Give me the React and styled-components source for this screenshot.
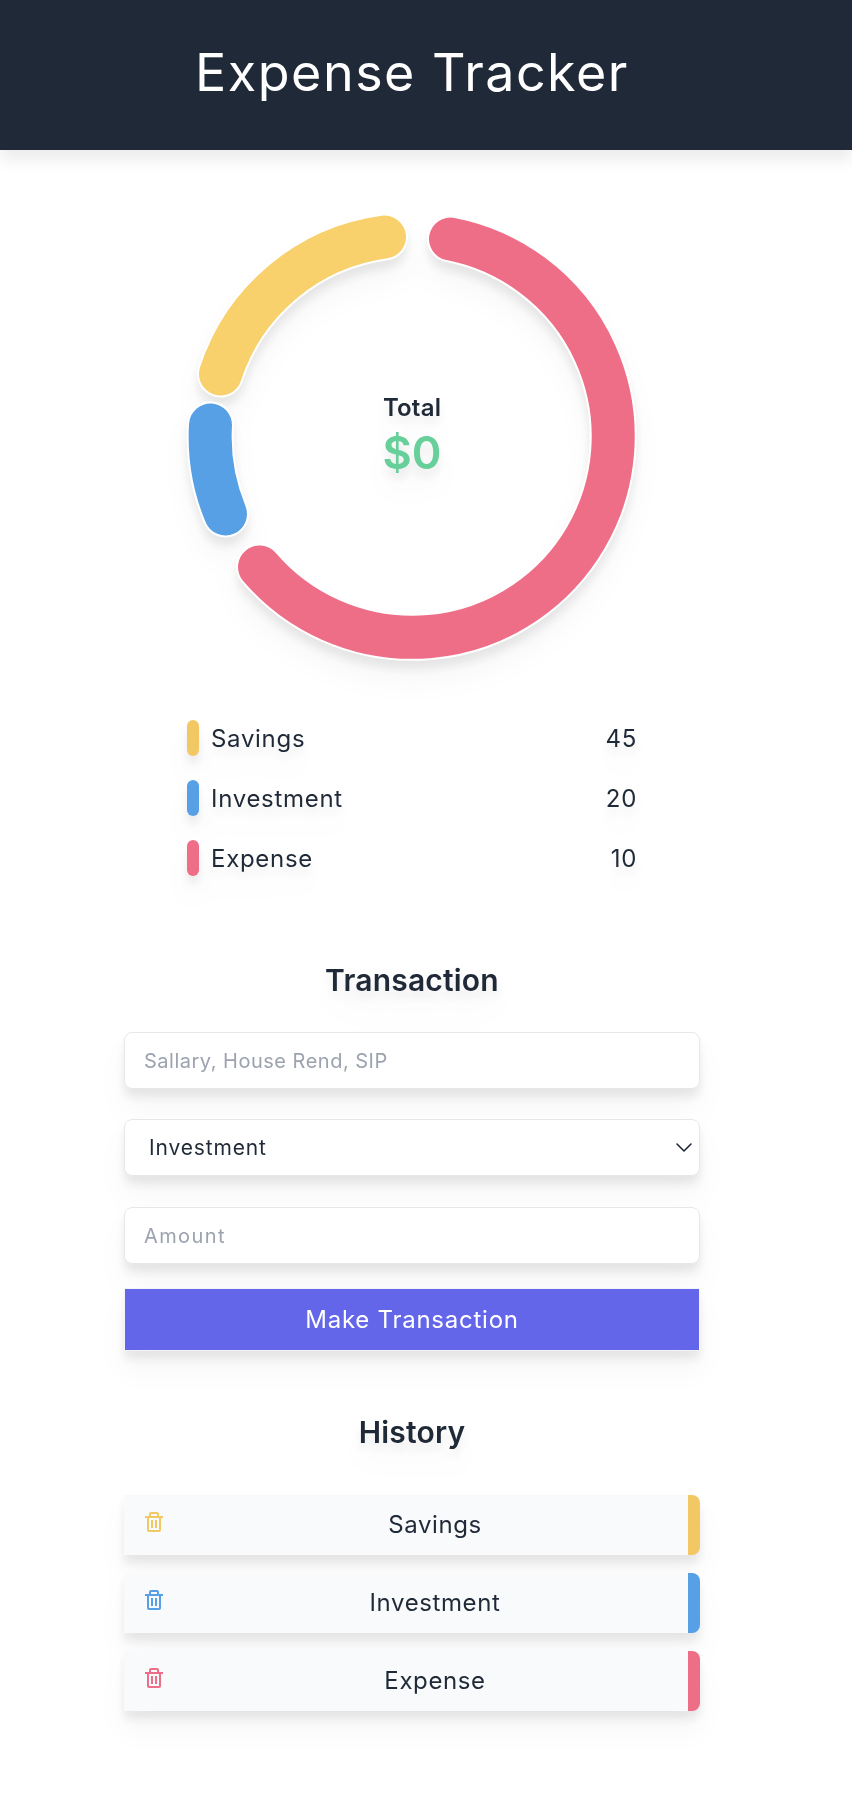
import React from "react";
import styled, { createGlobalStyle } from "styled-components";
import { BiTrash } from "react-icons/bi";

const Global = createGlobalStyle`
  html, body { margin: 0; padding: 0; background: #fff; }
  body { font-family: Inter, "Noto Sans", sans-serif; color: #1f2937; }
  * { box-sizing: border-box; }
`;

const Page = styled.div`width: 852px; height: 1804px; overflow: hidden; background: #fff;`;
const Header = styled.header`
  height: 150px; background: #1f2937; padding-right: 28px;
  display: flex; align-items: center; justify-content: center;
  box-shadow: 0 10px 15px rgba(0,0,0,0.08);
`;
const Title = styled.h1`
  margin: 0 0 6px; font-size: 52px; font-weight: 400; color: #fff; letter-spacing: 1.5px;
`;
const Main = styled.main`
  width: 824px; display: flex; flex-direction: column; align-items: center; padding-top: 56px;
  filter: drop-shadow(0 20px 13px rgba(0,0,0,0.03)) drop-shadow(0 8px 5px rgba(0,0,0,0.08));
`;
const ChartWrap = styled.div`width: 460px; height: 460px; position: relative;`;
const ChartSvg = styled.svg`display: block; overflow: visible;`;
const ChartCenter = styled.div`
  position: absolute; inset: 0; display: flex; flex-direction: column; align-items: center; justify-content: center;
`;
const TotalLabel = styled.div`font-size: 24px; font-weight: 600; line-height: 32px; letter-spacing: 0.2px; margin-top: -3px;`;
const TotalValue = styled.div`font-size: 45px; font-weight: 600; line-height: 50px; color: #66cf9a; margin-top: 4px;`;

const Legend = styled.ul`
  list-style: none; margin: 54px 0 0; padding: 0; width: 450px;
  display: flex; flex-direction: column; gap: 24px;
`;
const LegendRow = styled.li`display: flex; align-items: center; height: 36px; font-size: 24px; letter-spacing: 0.7px;`;
const Chip = styled.span`
  width: 12px; height: 36px; border-radius: 6px; background: ${p => p.$c}; margin-right: 12px;
`;
const LegendName = styled.span`flex: 1;`;
const Heading = styled.h2`
  margin: ${p => p.$mt}px 0 0; font-size: 30px; line-height: 36px; font-weight: 600; letter-spacing: 0.2px;
`;
const Form = styled.form`width: 576px; display: flex; flex-direction: column; margin-top: 34px;`;
const fieldCss = `
  width: 100%; height: 57px; border: 1px solid #e5e7eb; border-radius: 8px; background: #fff;
  font-family: inherit; font-size: 20px; color: #1f2937; outline: none;
`;
const Field = styled.input`
  ${fieldCss}
  padding: 0 19px; letter-spacing: ${p => p.$ls}px; margin-bottom: 30px;
  &::placeholder { color: #9ca3af; opacity: 1; }
`;
const SelectWrap = styled.div`position: relative; margin-bottom: 31px;`;
const Select = styled.select`
  ${fieldCss}
  appearance: none; display: block;
  padding: 0 24px; font-size: 21px; letter-spacing: 0.85px;
`;
const Chevron = styled.svg`position: absolute; right: 6px; top: 19px; pointer-events: none;`;
const SubmitButton = styled.button`
  width: 100%; height: 63px; border: 1px solid #f3f4f6; background: #6366e9; color: #fff; margin-top: -6px;
  font-family: inherit; font-size: 24px; letter-spacing: 0.75px;
`;
const History = styled.ul`list-style: none; margin: 45px 0 0; padding: 0; width: 576px; display: flex; flex-direction: column; gap: 18px;`;
const HistoryRow = styled.li`
  height: 60px; display: flex; background: #f9fafb; border-radius: 0 8px 8px 0; overflow: hidden;
  border-right: 12px solid ${p => p.$c};
`;
const DeleteIcon = styled.span`width: 58px; padding: 15px 0 0 18px; color: ${p => p.$c}; display: block; line-height: 0;`;
const HistoryName = styled.span`flex: 1; text-align: center; font-size: 24px; line-height: 60px; letter-spacing: 0.6px;`;

const CX = 229.5, CY = 230, R = 201;
const pt = (x, y) => `${CX + x} ${CY + y}`;
const arcs = [
  { c: "#f8d06c", d: `M${pt(-191,-62)} A${R} ${R} 0 0 1 ${pt(-27,-199)}` },
  { c: "#57a0e6", d: `M${pt(-186,78)} A${R} ${R} 0 0 1 ${pt(-201,-11)}` },
  { c: "#ef6e87", d: `M${pt(39,-197)} A${R} ${R} 0 1 1 ${pt(-152,131)}` },
];

const items = [
  ["Savings", 45, "#f2c864"],
  ["Investment", 20, "#57a0e6"],
  ["Expense", 10, "#ef6e87"],
];

export default function App() {
  return (
    <Page>
      <Global />
      <Header><Title>Expense Tracker</Title></Header>
      <Main>
        <ChartWrap>
          <ChartSvg width="460" height="460" viewBox="0 0 460 460" fill="none" strokeLinecap="round">
            {arcs.map(a => (
              <g key={a.c}>
                <path d={a.d} stroke="#fff" strokeWidth="47" />
                <path d={a.d} stroke={a.c} strokeWidth="43" />
              </g>
            ))}
          </ChartSvg>
          <ChartCenter>
            <TotalLabel>Total</TotalLabel>
            <TotalValue>$0</TotalValue>
          </ChartCenter>
        </ChartWrap>
        <Legend>
          {items.map(([n, v, c]) => (
            <LegendRow key={n}><Chip $c={c} /><LegendName>{n}</LegendName><span>{v}</span></LegendRow>
          ))}
        </Legend>
        <Heading $mt={86}>Transaction</Heading>
        <Form onSubmit={e => e.preventDefault()}>
          <Field $ls={0.5} placeholder="Sallary, House Rend, SIP" />
          <SelectWrap>
            <Select defaultValue="Investment">
              <option>Savings</option>
              <option>Investment</option>
              <option>Expense</option>
            </Select>
            <Chevron width="20" height="20" viewBox="0 0 20 20" fill="none" stroke="#1f2937" strokeWidth="1.6" strokeLinecap="round" strokeLinejoin="round">
              <path d="M3 6l7 7 7-7" />
            </Chevron>
          </SelectWrap>
          <Field $ls={1.4} placeholder="Amount" />
          <SubmitButton>Make Transaction</SubmitButton>
        </Form>
        <Heading $mt={63}>History</Heading>
        <History>
          {items.map(([n, , c]) => (
            <HistoryRow key={n} $c={c}>
              <DeleteIcon $c={c}><BiTrash size={24} /></DeleteIcon>
              <HistoryName>{n}</HistoryName>
            </HistoryRow>
          ))}
        </History>
      </Main>
    </Page>
  );
}
